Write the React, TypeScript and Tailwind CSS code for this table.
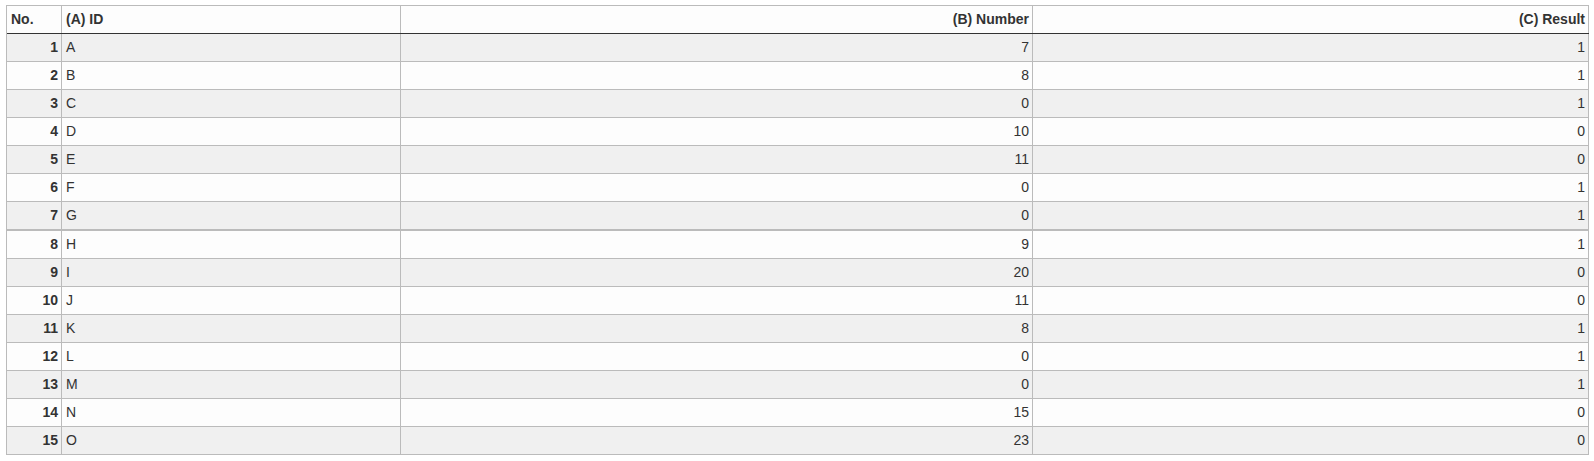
import React from "react";

const ids = "ABCDEFGHIJKLMNO".split("");
const nums = [7, 8, 0, 10, 11, 0, 0, 9, 20, 11, 8, 0, 0, 15, 23];
const res = [1, 1, 1, 0, 0, 1, 1, 1, 0, 0, 1, 1, 1, 0, 0];

export default function App() {
  return (
    <div className="min-h-screen bg-white pt-[5px] pl-[6px] text-[14px] text-[#333] [font-family:'Liberation_Sans',Arial,sans-serif]">
      <div className="w-[1583px] border-l border-t border-[#bbb]">
        <div className="flex h-[28px] border-b border-[#333] bg-[#fdfdfd] font-bold leading-[27px]">
          <div className="w-[55px] shrink-0 border-r border-[#bbb] px-1">No.</div>
          <div className="w-[339px] shrink-0 border-r border-[#bbb] px-1">(A) ID</div>
          <div className="w-[632px] shrink-0 border-r border-[#bbb] px-[3px] text-right">(B) Number</div>
          <div className="w-[556px] shrink-0 border-r border-[#bbb] px-[3px] text-right">(C) Result</div>
        </div>
        {ids.map((id, i) => (
          <div
            key={id}
            className={`flex leading-[27px] border-[#bbb] ${i === 6 ? "h-[29px] border-b-2" : "h-[28px] border-b"} ${i % 2 === 0 ? "bg-[#f0f0f0]" : "bg-[#fdfdfd]"}`}
          >
            <div className="w-[55px] shrink-0 border-r border-[#bbb] px-[3px] text-right font-bold">{i + 1}</div>
            <div className="w-[339px] shrink-0 border-r border-[#bbb] px-1">{id}</div>
            <div className="w-[632px] shrink-0 border-r border-[#bbb] px-[3px] text-right">{nums[i]}</div>
            <div className="w-[556px] shrink-0 border-r border-[#bbb] px-[3px] text-right">{res[i]}</div>
          </div>
        ))}
      </div>
    </div>
  );
}
